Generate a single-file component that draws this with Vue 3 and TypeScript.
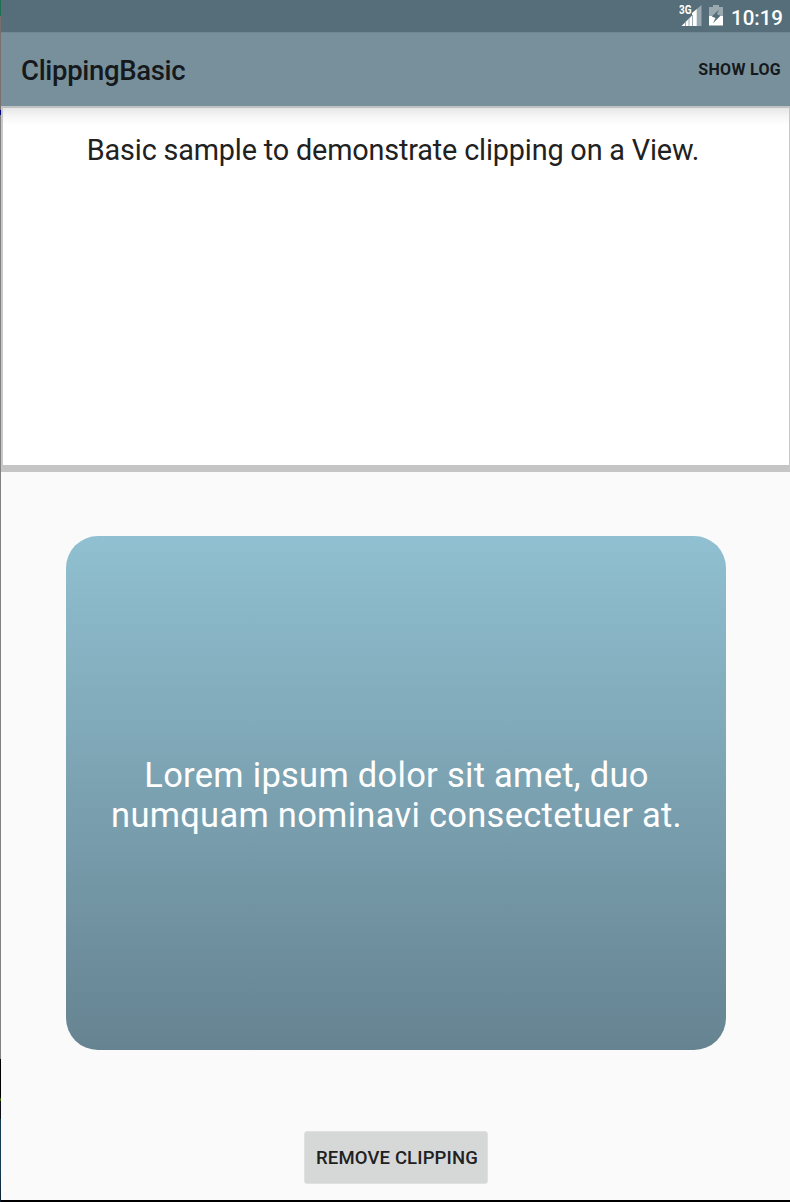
<script setup lang="ts">
import { ref } from 'vue'

const clipped = ref<boolean>(true)
const lines: string[] = ['Lorem ipsum dolor sit amet, duo', 'numquam nominavi consectetuer at.']
</script>

<template>
  <div class="window">
    <div class="edge"></div>
    <div class="screen">
      <header class="status">
        <svg class="signal" width="24" height="24" viewBox="0 0 24 24">
          <path d="M17.8 7L22.5 3v21H17.8z" fill="#9aa8af" />
          <path d="M2.5 24L13 13.5V11L17.8 7v17z" fill="#fff" />
          <path d="M6.5 19v5M10 16v8M13.5 13v11" stroke="#8398a2" stroke-width=".8" />
          <text x="0" y="12" font-size="12" font-weight="700" fill="#fff" textLength="12.5" lengthAdjust="spacingAndGlyphs">3G</text>
        </svg>
        <svg class="battery" width="14" height="21" viewBox="0 0 14 21">
          <path d="M4 0h6v2h4v9H0V2h4z" fill="#9aa8af" />
          <path d="M0 11h14v9.5H0z" fill="#fff" />
          <path d="M10 4.5L2.8 11.5l3.7 1.5L4 18.2l7.5-7.4L7.8 9.3z" fill="#566e7a" />
        </svg>
        <span class="clock">10:19</span>
      </header>
      <div class="toolbar">
        <h1 class="title">ClippingBasic</h1>
        <span class="action">SHOW LOG</span>
      </div>
      <section class="intro">
        <p class="description">Basic sample to demonstrate clipping on a View.</p>
      </section>
      <main class="content">
        <div class="frame" :class="{ clipped }">
          <p v-for="(line, i) in lines" :key="i" class="lorem">{{ line }}</p>
        </div>
        <button class="toggle" @click="clipped = !clipped"><span>{{ clipped ? 'REMOVE CLIPPING' : 'CLIP' }}</span></button>
      </main>
    </div>
  </div>
</template>

<style>
body {
  margin: 0;
}
</style>

<style scoped>
.window {
  display: flex;
  width: 790px;
  height: 1202px;
  overflow: hidden;
  font-family: Roboto, sans-serif;
  color: #212121;
}
.edge {
  width: 1px;
  background: linear-gradient(#1b7050 0 16px, #77706d 16px 110px, #000080 110px 115px, #808080 115px 1059px, #000 1059px 1098px, #3f5f08 1098px 1101px, #0c1014 1101px 1119px, #163b55 1119px 1170px, #0b1d30 1202px);
}
.screen {
  flex: 1;
  display: flex;
  flex-direction: column;
  background: #fafafa;
  box-sizing: border-box;
  border-bottom: 2px solid #000;
}
.status {
  height: 32px;
  display: flex;
  align-items: flex-start;
  justify-content: flex-end;
  box-sizing: border-box;
  padding-right: 7px;
  background: #566e7a;
  color: #fff;
}
.signal {
  margin: 2px 6px 0 0;
}
.battery {
  margin: 5px 7.5px 0 0;
}
.clock {
  font-size: 20.5px;
  font-weight: 500;
  line-height: 36px;
}
.toolbar {
  height: 74px;
  display: flex;
  align-items: center;
  justify-content: space-between;
  box-sizing: border-box;
  padding: 0 9px 0 20px;
  background: #78909c;
  border-top: 1px solid #708894;
  color: #15191b;
}
.title {
  margin: 1px 0 0;
  font-size: 27.5px;
  font-weight: 500;
  letter-spacing: -.32px;
}
.action {
  font-size: 16px;
  font-weight: 700;
  letter-spacing: .3px;
}
.intro {
  height: 366px;
  box-sizing: border-box;
  border: solid #c8c8c8;
  border-width: 2px 1px 7px 2px;
  border-top-color: #bfc1c2;
  border-bottom-color: #c5c5c5;
  background: linear-gradient(#e6e6e6, #f5f5f5 8px, #fff 17px);
}
.description {
  margin: 24px 6px 0 0;
  line-height: 36px;
  font-size: 28.8px;
  letter-spacing: -.16px;
  text-align: center;
  white-space: nowrap;
}
.content {
  flex: 1;
  display: flex;
  flex-direction: column;
  align-items: center;
}
.frame {
  width: 660px;
  height: 514px;
  margin: 64px 0 0 1px;
  box-sizing: border-box;
  padding: 4px 0 0 1px;
  display: flex;
  flex-direction: column;
  align-items: center;
  justify-content: center;
  background: linear-gradient(#90c0d1, #668391);
}
.clipped {
  border-radius: 32px;
}
.lorem {
  margin: 0;
  color: #fff;
  font-size: 34.5px;
  line-height: 40.5px;
  letter-spacing: .28px;
  white-space: nowrap;
}
.toggle {
  width: 184px;
  height: 53px;
  margin: 81px 0 0 1px;
  padding: 1px 0 0 2px;
  border: 1px solid #e0e1e0;
  border-radius: 3px;
  background: #d6d8d7;
  color: #212121;
  font: 500 18.5px Roboto, sans-serif;
  letter-spacing: .15px;
  white-space: nowrap;
}
</style>
